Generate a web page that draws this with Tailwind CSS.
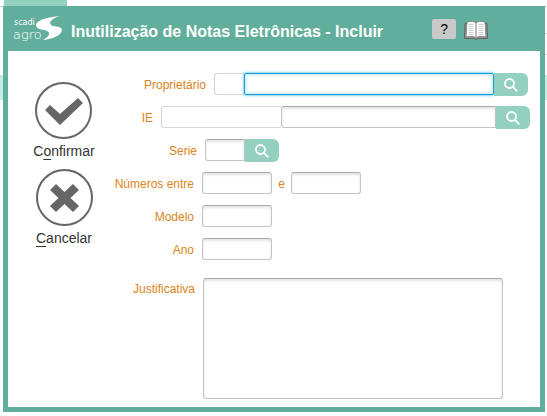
<!DOCTYPE html>
<html lang="pt-BR">
<head>
    <meta charset="UTF-8">
    <meta name="viewport" content="width=device-width, initial-scale=1.0">
    <title>Inutilização de Notas Eletrônicas - Incluir</title>
    <script src="https://cdn.jsdelivr.net/npm/@tailwindcss/browser@4"></script>
</head>
<body class="relative min-h-screen bg-white font-['Liberation_Sans',Arial,sans-serif] antialiased">
    <!-- page behind the dialog -->
    <div class="absolute inset-0 -z-10 overflow-hidden">
        <div class="absolute left-1 top-0 h-2 w-[63px] bg-[#94d0c0]"></div>
        <div class="absolute inset-x-0 top-[6px] h-px bg-[#b5ddd2]"></div>
        <div class="absolute right-0 w-1 top-[33px] h-px bg-gray-300"></div>
        <div class="absolute right-0 w-1 top-[54px] h-px bg-gray-300"></div>
        <div class="absolute inset-x-0 top-[75px] h-[25px] bg-[#c6ece1]"></div>
    </div>

    <div class="flex flex-col min-h-screen pl-[3px] pr-[2px] pt-[6px] pb-1">
        <main class="flex flex-col flex-1 bg-[#62ae9c] px-[5px] pb-[5px]">
            <header class="flex items-center h-[45px] pl-[5px]">
                <svg class="w-[50px] h-7 shrink-0" viewBox="0 0 50 28" role="img" aria-label="scadi agro" fill="#fff">
                    <text x="1" y="10" font-family="DejaVu Sans, sans-serif" font-size="8">scadi</text>
                    <text x="0" y="24" font-family="DejaVu Sans, sans-serif" font-size="13" font-weight="200">agro</text>
                    <path d="M47 1C36 2 23 5 23 10c0 5 7 4 11 6 4 2 2 6-4 9 10-1 19-5 19-10 0-4-8-3-11-5-3-3 2-7 9-9z"/>
                </svg>
                <h1 class="ml-2 text-base font-bold text-white whitespace-nowrap pt-[6px]">Inutilização de Notas Eletrônicas - Incluir</h1>
                <button type="button" class="ml-[49px] w-6 h-5 shrink-0 rounded-xs bg-[#c9c9c9] text-sm leading-5 text-black">?</button>
                <button type="button" aria-label="Manual" class="ml-2 mt-1 shrink-0">
                    <svg class="w-6 h-5" viewBox="0 0 24 20">
                        <path d="M1 2.500L.5 17.500h9.500l2 1.500 2-1.500h9.500L23 2.500z" fill="#999" stroke="#555" stroke-width=".8"/>
                        <path d="M3 1c4-1 7-1 9 1 2-2 5-2 9-1l1 15c-4-1-8-1-10 1-2-2-6-2-10-1z" fill="#fff" stroke="#555" stroke-width=".6"/>
                        <path d="M4.500 3.500h5M4.500 5.500h5M4.500 7.500h5M4.500 9.500h5M4.500 11.500h5M4.500 13.500h5M14.500 3.500h5M14.500 5.500h5M14.500 7.500h5M14.500 9.500h5M14.500 11.500h5M14.500 13.500h5" stroke="#ccc"/>
                        <path d="M12 2v15" stroke="#777"/>
                    </svg>
                </button>
            </header>

            <form class="flex flex-1 bg-white">
                <div class="flex flex-col items-center w-28 shrink-0 pt-[31px] gap-2 text-sm text-[#333]">
                    <button type="button" class="flex flex-col items-center gap-[2px]">
                        <svg class="w-[57px] h-[57px]" viewBox="0 0 57 57">
                            <circle cx="28.5" cy="28.5" r="27.5" fill="none" stroke="#666" stroke-width="2"/>
                            <path d="M10 28l5-5 10 9 18-16 5 5-23 22z" fill="#666"/>
                        </svg>
                        <span>C<u class="underline-offset-3">o</u>nfirmar</span>
                    </button>
                    <button type="button" class="flex flex-col items-center gap-[2px]">
                        <svg class="w-[57px] h-[57px]" viewBox="0 0 57 57">
                            <circle cx="28.5" cy="28.5" r="27.5" fill="none" stroke="#666" stroke-width="2"/>
                            <path d="M20 15l8.500 8 8.500-8 6 6-8.500 8 8.500 8-6 6-8.500-8-8.500 8-6-6 8.500-8-8.500-8z" fill="#666"/>
                        </svg>
                        <span><u class="underline-offset-3">C</u>ancelar</span>
                    </button>
                </div>

                <div class="flex flex-col flex-1 pt-[22px] pb-2 pr-[10px] gap-[11px] text-xs leading-6 text-[#db8420]">
                    <div class="flex h-[22px]">
                        <label for="proprietario" class="w-[86px] mr-2 shrink-0 text-right">Proprietário</label>
                        <input id="codigo" aria-label="Código do proprietário" class="w-[30px] h-[22px] px-1 border border-r-0 border-[#d6d6d6] rounded-l-[3px] outline-none">
                        <input id="proprietario" class="w-[250px] h-[22px] min-w-0 px-1 border border-[#0f9fd6] rounded-xs outline-none shadow-[0_0_2px_1px_#8fd6f2,inset_0_0_2px_2px_#d8eef8]">
                        <button type="button" aria-label="Pesquisar proprietário" class="flex items-center justify-center w-[34px] h-[23px] shrink-0 rounded-r-md bg-[#94d0c0]">
                            <svg class="w-[14px] h-[14px]" viewBox="0 0 14 14" fill="none" stroke="#fff" stroke-width="1.800"><circle cx="5.500" cy="5.500" r="4.500"/><path d="M8.700 8.700l4.600 4.600"/></svg>
                        </button>
                    </div>
                    <div class="flex h-[22px]">
                        <label for="ie" class="w-[33px] mr-2 shrink-0 text-right">IE</label>
                        <input id="ie" class="w-[120px] h-[22px] px-1 border border-r-0 border-[#d6d6d6] rounded-l-[3px] outline-none">
                        <input id="ie-nome" aria-label="Descrição da IE" class="w-[215px] h-[22px] min-w-0 px-1 border border-[#c4c4c4] border-t-[#aaa] rounded-l-[3px] outline-none shadow-[inset_0_2px_3px_#e4e4e4]">
                        <button type="button" aria-label="Pesquisar IE" class="flex items-center justify-center w-[34px] h-[23px] shrink-0 rounded-r-md bg-[#94d0c0]">
                            <svg class="w-[14px] h-[14px]" viewBox="0 0 14 14" fill="none" stroke="#fff" stroke-width="1.800"><circle cx="5.500" cy="5.500" r="4.500"/><path d="M8.700 8.700l4.600 4.600"/></svg>
                        </button>
                    </div>
                    <div class="flex h-[22px]">
                        <label for="serie" class="w-[77px] mr-2 shrink-0 text-right">Serie</label>
                        <input id="serie" class="w-10 h-[22px] px-1 border border-[#c4c4c4] border-t-[#aaa] rounded-l-[3px] outline-none shadow-[inset_0_2px_3px_#e4e4e4]">
                        <button type="button" aria-label="Pesquisar série" class="flex items-center justify-center w-[34px] h-[23px] shrink-0 rounded-r-md bg-[#94d0c0]">
                            <svg class="w-[14px] h-[14px]" viewBox="0 0 14 14" fill="none" stroke="#fff" stroke-width="1.800"><circle cx="5.500" cy="5.500" r="4.500"/><path d="M8.700 8.700l4.600 4.600"/></svg>
                        </button>
                    </div>
                    <div class="flex h-[22px]">
                        <label for="numero-de" class="w-[86px] -ml-3 mr-2 shrink-0 text-right whitespace-nowrap">Números entre</label>
                        <input id="numero-de" class="w-[70px] h-[22px] px-1 border border-[#c4c4c4] border-t-[#aaa] rounded-[3px] outline-none shadow-[inset_0_2px_3px_#e4e4e4]">
                        <label for="numero-ate" class="w-[19px] text-center">e</label>
                        <input id="numero-ate" class="w-[70px] h-[22px] px-1 border border-[#c4c4c4] border-t-[#aaa] rounded-[3px] outline-none shadow-[inset_0_2px_3px_#e4e4e4]">
                    </div>
                    <div class="flex h-[22px]">
                        <label for="modelo" class="w-[74px] mr-2 shrink-0 text-right">Modelo</label>
                        <input id="modelo" class="w-[70px] h-[22px] px-1 border border-[#c4c4c4] border-t-[#aaa] rounded-[3px] outline-none shadow-[inset_0_2px_3px_#e4e4e4]">
                    </div>
                    <div class="flex h-[22px]">
                        <label for="ano" class="w-[74px] mr-2 shrink-0 text-right">Ano</label>
                        <input id="ano" class="w-[70px] h-[22px] px-1 border border-[#c4c4c4] border-t-[#aaa] rounded-[3px] outline-none shadow-[inset_0_2px_3px_#e4e4e4]">
                    </div>
                    <div class="flex flex-1 pt-[7px] leading-[22px]">
                        <label for="justificativa" class="w-[75px] mr-2 shrink-0 text-right">Justificativa</label>
                        <textarea id="justificativa" class="w-[300px] min-h-[120px] p-1 border border-[#c4c4c4] border-t-[#aaa] rounded-[3px] outline-none resize-none shadow-[inset_0_2px_3px_#e4e4e4]"></textarea>
                    </div>
                </div>
            </form>
        </main>
    </div>
</body>
</html>
